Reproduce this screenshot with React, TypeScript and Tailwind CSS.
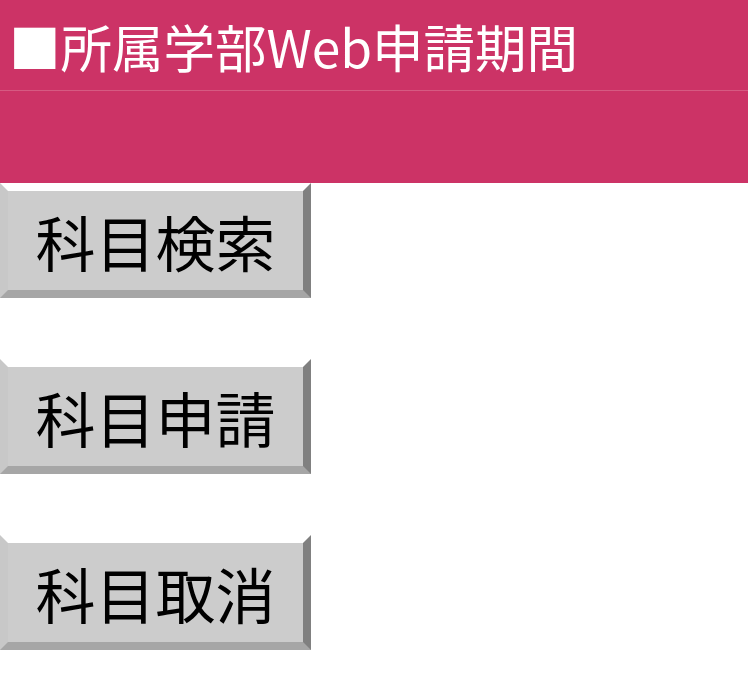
export default function App() {
  const font = { fontFamily: '"Noto Sans CJK JP", "Noto Sans", sans-serif' };
  const buttons = ["科目検索", "科目申請", "科目取消"];
  return (
    <div className="w-[748px] h-[680px] bg-white overflow-hidden" style={font}>
      <div className="bg-[#cc3366] h-[183px] flex flex-col">
        <div className="h-[91px] border-b border-[#d65a82] flex items-center pl-[9px] pt-[2px]">
          <h1 className="text-white text-[51.5px] leading-none font-normal tracking-normal">■所属学部Web申請期間</h1>
        </div>
        <div className="flex-1"></div>
      </div>
      <div className="flex flex-col gap-[61px]">
        {buttons.map((b) => (
          <button
            key={b}
            className="w-[311px] h-[115px] bg-[#cccccc] text-black text-[60px] leading-none flex items-center justify-center border-[8px] border-t-white border-l-[#c8c8c8] border-r-[#808080] border-b-[#a6a6a6] border-solid"
            style={font}
          >
            {b}
          </button>
        ))}
      </div>
    </div>
  );
}
